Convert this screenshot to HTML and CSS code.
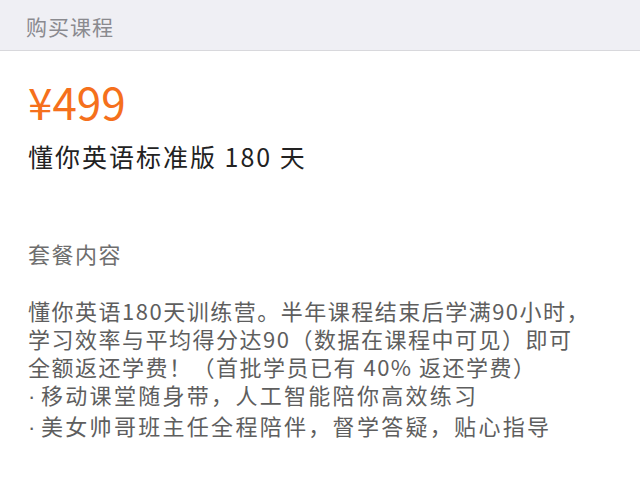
FILE: index.html
```html
<!DOCTYPE html>
<html lang="zh-CN">

<head>
    <meta charset="UTF-8">
    <meta name="viewport" content="width=device-width, initial-scale=1.0">
    <title>购买课程</title>
    <link rel="stylesheet" href="styles.css">
</head>

<body>
    <div class="page-header">购买课程</div>

    <div class="product">
        <div class="price">¥499</div>
        <h1 class="product-name">懂你英语标准版 180 天</h1>

        <h2 class="section-title">套餐内容</h2>
        <div class="package">
            <p>懂你英语180天训练营。半年课程结束后学满90小时，<br>学习效率与平均得分达90（数据在课程中可见）即可<br>全额返还学费！（首批学员已有 40% 返还学费）</p>
            <p class="point"><span class="dot">·</span>移动课堂随身带，人工智能陪你高效练习</p>
            <p class="point"><span class="dot">·</span>美女帅哥班主任全程陪伴，督学答疑，贴心指导</p>
        </div>
    </div>
</body>

</html>
```

FILE: styles.css
```css
* {
    margin: 0;
    padding: 0;
    box-sizing: border-box;
}

body {
    font-family: "Noto Sans CJK SC", "Noto Sans", sans-serif;
    background: #fff;
    color: #222;
}

.page-header {
    height: 51px;
    padding: 2px 0 0 26px;
    line-height: 48px;
    font-size: 21px;
    letter-spacing: 1px;
    color: #8a8a8f;
    background: #efeff4;
    border-bottom: 1px solid #d8d8dc;
}

.product {
    padding: 25px 28px 0 28px;
}

.price {
    font-size: 44px;
    line-height: 50px;
    color: #f5701c;
}

.product-name {
    margin-top: 13px;
    font-size: 25px;
    font-weight: 400;
    line-height: 34px;
    letter-spacing: 2px;
    color: #222;
}

.section-title {
    margin-top: 66px;
    font-size: 22px;
    font-weight: 400;
    line-height: 28px;
    letter-spacing: 1.5px;
    color: #6e6e6e;
}

.package {
    margin-top: 29px;
    font-size: 22px;
    line-height: 28px;
    letter-spacing: 1.5px;
    white-space: nowrap;
    color: #5e5e5e;
}

.package .point {
    letter-spacing: 2.3px;
}

.package .dot {
    display: inline-block;
    width: 13px;
    font-family: "Liberation Sans", sans-serif;
    letter-spacing: 0;
}
```
